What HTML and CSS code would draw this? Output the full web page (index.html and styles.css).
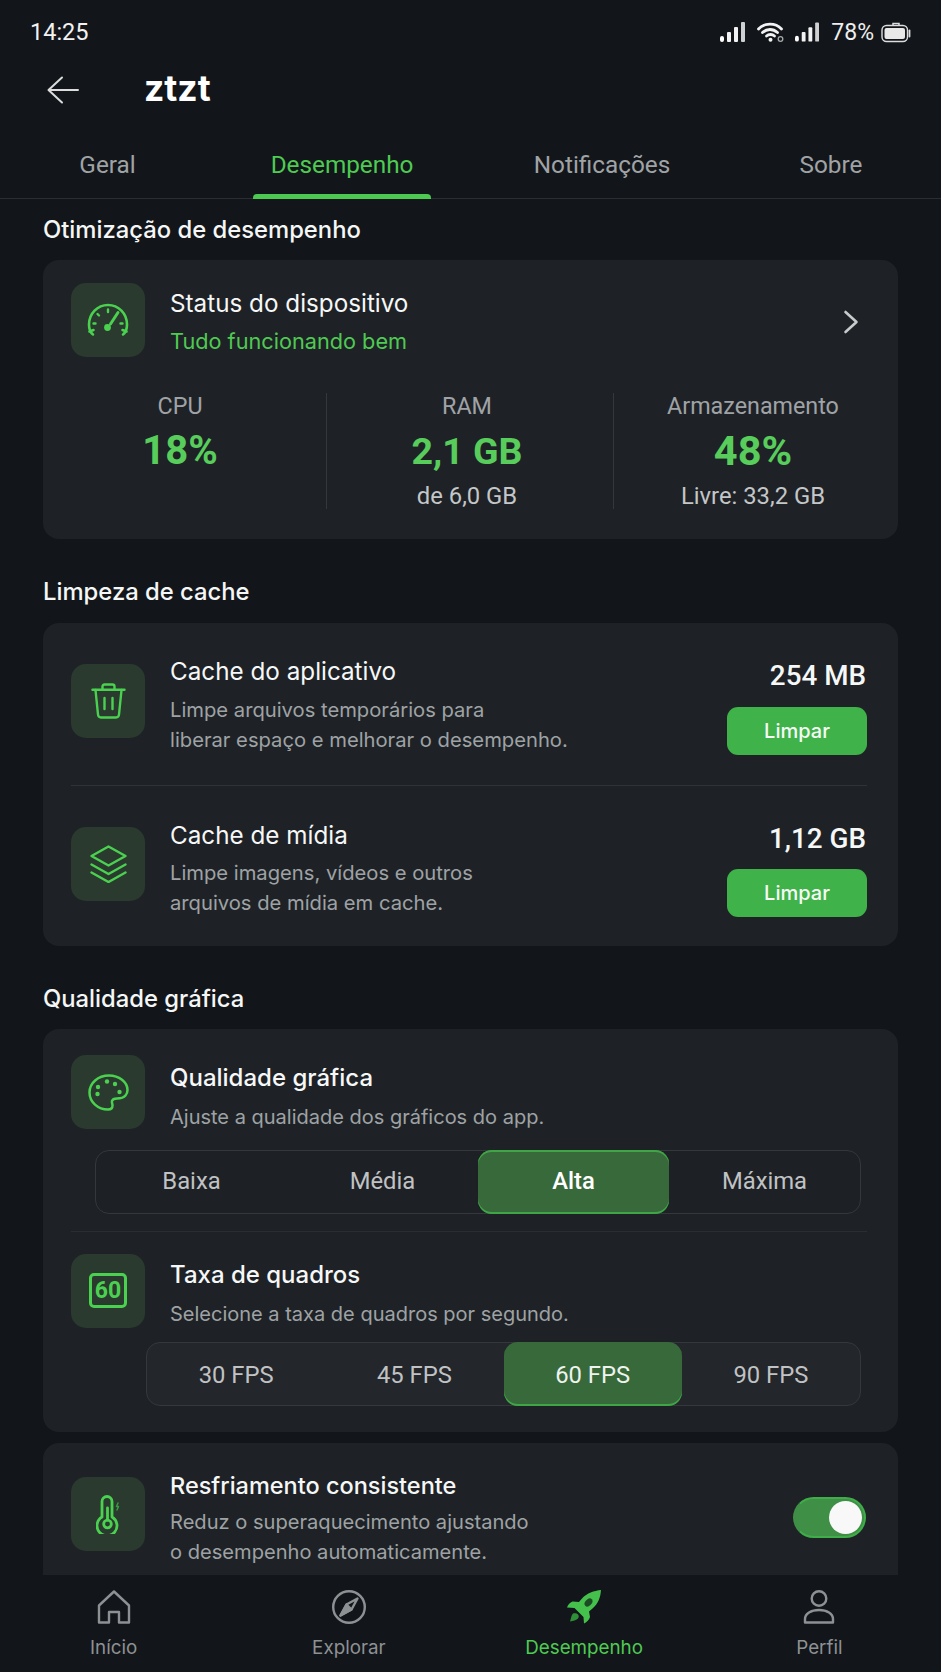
FILE: index.html
```html
<!DOCTYPE html>
<html lang="pt">
<head>
<meta charset="utf-8">
<title>ztzt</title>
<link rel="stylesheet" href="styles.css">
</head>
<body>
<div class="app">
  <div class="statusbar">
    <span class="time">14:25</span>
    <div class="status-icons">
      <svg class="sig" viewBox="0 0 25 20"><rect x="0" y="14" width="4" height="6" rx="2" fill="#fff"/><rect x="7" y="10" width="4" height="10" rx="1" fill="#f2f2f2"/><rect x="14" y="5" width="4" height="15" rx="1" fill="#f2f2f2"/><rect x="21" y="0" width="4" height="20" rx="1" fill="#cfd0d1"/></svg>
      <svg class="wifi" viewBox="0 0 27 20" fill="none" stroke="#f2f2f2" stroke-width="2.800" stroke-linecap="round"><path d="M1.500 7C7.500 .6 18.500 .6 24.500 7"/><path d="M5.500 10.500c4.500-4 10.500-4 15 0"/><path d="M9.500 14c2.200-2 5.800-2 8 0"/><circle cx="13.500" cy="17.800" r="2" fill="#f2f2f2" stroke="none"/><circle cx="23.500" cy="17" r="2.300" stroke="#a8a8a8" stroke-width="1.300"/></svg>
      <svg class="sig sig2" viewBox="0 0 25 20"><rect x="0" y="14" width="4" height="6" rx="2" fill="#fff"/><rect x="7" y="10" width="4" height="10" rx="1" fill="#f2f2f2"/><rect x="14" y="5" width="4" height="15" rx="1" fill="#f2f2f2"/><rect x="21" y="0" width="4" height="20" rx="1" fill="#cfd0d1"/></svg>
      <span class="pct">78%</span>
      <svg class="batt" viewBox="0 0 30 21" fill="none"><path d="M12 3V1.500h6V3" stroke="#ddd" stroke-width="1.500"/><rect x="1" y="3.500" width="25.500" height="16" rx="4.500" stroke="#ddd" stroke-width="1.400"/><rect x="3.500" y="6" width="20.500" height="11" rx="2" fill="#e8e8e8"/><path d="M28.500 8.500v6" stroke="#ddd" stroke-width="1.800" stroke-linecap="round"/></svg>
    </div>
  </div>

  <header class="appbar">
    <svg class="back" viewBox="0 0 32 28" fill="none" stroke="#dcdcdc" stroke-width="2" stroke-linecap="round" stroke-linejoin="round"><path d="M15 1.500 1.500 14 15 26.500M2 14h29"/></svg>
    <h1 class="title">ztzt</h1>
  </header>

  <nav class="tabs">
    <span class="tab tab-a">Geral</span>
    <span class="tab tab-b tab-active">Desempenho</span>
    <span class="tab tab-c">Notificações</span>
    <span class="tab tab-d">Sobre</span>
  </nav>

  <main class="content">
    <h2 class="section first">Otimização de desempenho</h2>
    <section class="card card-status">
      <div class="status-row">
        <div class="tile">
          <svg class="ico-gauge" viewBox="0 0 42 34" fill="none" stroke="#4bd150" stroke-width="2.600" stroke-linecap="round" stroke-linejoin="round"><path d="M6 31.500C3.300 29.500 2 25.500 2 21.500 2 10.500 10.500 2 21 2s19 8.500 19 19.500c0 4-1.300 8-4 10"/><path d="M2.500 28.500 6.500 27M39.500 28.500 35.500 27"/><path d="M21 6.500v2.500M10.500 11l1.500 1.500M6.500 20.500h2M33.500 20.500h2" stroke-width="2.400"/><path d="M31 9.500 23.500 21" stroke-width="3"/><circle cx="20.500" cy="24.500" r="3.400" fill="#4bd150" stroke="none"/></svg>
        </div>
        <div class="status-text">
          <div class="row-title">Status do dispositivo</div>
          <div class="status-ok">Tudo funcionando bem</div>
        </div>
        <svg class="chev" viewBox="0 0 16 24" fill="none" stroke="#c8cacc" stroke-width="2.600" stroke-linecap="round" stroke-linejoin="round"><path d="M2.500 2 13.500 12 2.500 22"/></svg>
      </div>
      <div class="stats">
        <div class="stat stat-a">
          <div class="stat-label">CPU</div>
          <div class="stat-value">18%</div>
        </div>
        <div class="stat stat-b">
          <div class="stat-label">RAM</div>
          <div class="stat-value">2,1 GB</div>
          <div class="stat-sub">de 6,0 GB</div>
        </div>
        <div class="stat stat-c">
          <div class="stat-label">Armazenamento</div>
          <div class="stat-value">48%</div>
          <div class="stat-sub">Livre: 33,2 GB</div>
        </div>
      </div>
    </section>

    <h2 class="section">Limpeza de cache</h2>
    <section class="card card-cache">
      <div class="cache-row cache-first">
        <div class="tile">
          <svg class="ico-trash" viewBox="0 0 35 36" fill="none" stroke="#4bd150" stroke-width="2.400" stroke-linecap="round" stroke-linejoin="round"><path d="M1.500 6.800h32"/><path d="M11.500 6.500V3.500c0-1.200.8-2 2-2h8c1.200 0 2 .8 2 2v3"/><path d="M4.500 7 7 31.500c.2 2 1.300 3 3 3h15c1.700 0 2.800-1 3-3L30.500 7"/><path d="M13.500 15v11M21.500 15v11"/></svg>
        </div>
        <div class="cache-text">
          <div class="row-title">Cache do aplicativo</div>
          <p class="desc">Limpe arquivos temporários para<br>liberar espaço e melhorar o desempenho.</p>
        </div>
        <div class="cache-side">
          <div class="size">254 MB</div>
          <button class="btn">Limpar</button>
        </div>
      </div>
      <div class="cache-row cache-second">
        <div class="tile">
          <svg class="ico-layers" viewBox="0 0 37 38" fill="none" stroke="#4bd150" stroke-width="2.400" stroke-linecap="round" stroke-linejoin="round"><path d="M18.500 1.500 35.500 11 18.500 20.500 1.500 11Z"/><path d="M1.500 19.500 18.500 29 35.500 19.500"/><path d="M1.500 27.500 18.500 37 35.500 27.500"/></svg>
        </div>
        <div class="cache-text">
          <div class="row-title">Cache de mídia</div>
          <p class="desc">Limpe imagens, vídeos e outros<br>arquivos de mídia em cache.</p>
        </div>
        <div class="cache-side">
          <div class="size">1,12 GB</div>
          <button class="btn">Limpar</button>
        </div>
      </div>
    </section>

    <h2 class="section section-q">Qualidade gráfica</h2>
    <section class="card card-quality">
      <div class="option-head">
        <div class="tile">
          <svg class="ico-palette" viewBox="0 0 41 37" fill="none" stroke="#4bd150" stroke-width="2.500" stroke-linecap="round" stroke-linejoin="round"><path d="M21 1.500C10 1.500 1.500 9 1.500 18.500 1.500 28 10 35.500 20 35.500c3 0 4.500-1.500 4.500-4 0-2-1-3-.5-4.500.6-2 2.500-2.500 5-2.500 3.500 0 6.500-.5 8.500-3 1.500-1.800 2-3.500 2-5.500C39.500 8 31 1.500 21 1.500Z"/><g fill="#4bd150" stroke="none"><circle cx="9.500" cy="20" r="2.200"/><circle cx="10" cy="13" r="2.200"/><circle cx="19" cy="7.500" r="2.200"/><circle cx="27" cy="10" r="2.200"/><circle cx="31.500" cy="18" r="2.200"/></g></svg>
        </div>
        <div class="option-text">
          <div class="row-title row-medium">Qualidade gráfica</div>
          <p class="desc desc-option">Ajuste a qualidade dos gráficos do app.</p>
        </div>
      </div>
      <div class="seg seg-quality">
        <span class="seg-item">Baixa</span>
        <span class="seg-item">Média</span>
        <span class="seg-item seg-on seg-strong">Alta</span>
        <span class="seg-item">Máxima</span>
      </div>
      <div class="rule"></div>
      <div class="option-head option-fps">
        <div class="tile">
          <div class="ico-60">60</div>
        </div>
        <div class="option-text">
          <div class="row-title row-medium">Taxa de quadros</div>
          <p class="desc desc-option">Selecione a taxa de quadros por segundo.</p>
        </div>
      </div>
      <div class="seg seg-fps">
        <span class="seg-item">30 FPS</span>
        <span class="seg-item">45 FPS</span>
        <span class="seg-item seg-on">60 FPS</span>
        <span class="seg-item">90 FPS</span>
      </div>
    </section>

    <section class="card card-cool">
      <div class="tile">
        <svg class="ico-thermo" viewBox="0 0 25 39" fill="none" stroke="#4bd150" stroke-width="2.800" stroke-linecap="round" stroke-linejoin="round"><path d="M6.500 22V6.500a5 5 0 0 1 10 0V22a10 10 0 1 1-10 0Z" transform="translate(-.5 0)"/><circle cx="11.500" cy="29" r="3.800"/><path d="M11.500 25V13"/><path d="M22 8l-1.500 3.500h2L21 15" stroke="#3a9a40" stroke-width="1.500"/></svg>
      </div>
      <div class="cool-text">
        <div class="row-title row-cool">Resfriamento consistente</div>
        <p class="desc">Reduz o superaquecimento ajustando<br>o desempenho automaticamente.</p>
      </div>
      <div class="toggle"><span class="knob"></span></div>
    </section>
  </main>

  <nav class="bottom">
    <div class="bn">
      <svg class="bn-ico" viewBox="0 0 33 34" fill="none" stroke="#8e9194" stroke-width="2.400" stroke-linejoin="round" stroke-linecap="round"><path d="M1.500 15.500 16.500 1.500 31.500 15.500V32.500H21.500V22H11.500V32.500H1.500Z"/></svg>
      <span>Início</span>
    </div>
    <div class="bn">
      <svg class="bn-ico" viewBox="0 0 34 34" fill="none" stroke="#8e9194" stroke-width="2.400" stroke-linejoin="round"><circle cx="17" cy="17" r="15.800"/><path d="M25.500 8.500 14.500 14.500 8.500 25.500 19.500 19.500Z"/><path d="M14.500 14.500 19.500 19.500 8.500 25.500Z" fill="#8e9194"/></svg>
      <span>Explorar</span>
    </div>
    <div class="bn bn-on">
      <svg class="bn-ico" viewBox="0 0 34 34"><path fill="#45c04c" d="M34 0c-7 .8-14 3-19 8.500l-3 3.500-6.500-.5C3 12.500 1 14.500 0 17.500l7.500.5 9 9 .5 6.500c2.500-1 5-3.500 6-6.500l-1-5.500 3.500-3C31.500 13.500 33.500 7 34 0Z"/><ellipse cx="21.500" cy="12.500" rx="4.600" ry="3.100" transform="rotate(-45 21.500 12.500)" fill="#1b4a24"/><path fill="#2f8f38" d="M6 23.500c2-.8 4-.2 5 1s1.200 3-.5 4.500c-1.500 1.300-4 1.800-7.500 2.500 1-3 1.300-6.500 3-8Z"/></svg>
      <span>Desempenho</span>
    </div>
    <div class="bn">
      <svg class="bn-ico" viewBox="0 0 31 34" fill="none" stroke="#8e9194" stroke-width="2.400" stroke-linejoin="round"><circle cx="15.500" cy="8.500" r="7.300"/><path d="M1.500 32.500V29c0-5.500 6-9 14-9s14 3.500 14 9v3.500Z"/></svg>
      <span>Perfil</span>
    </div>
  </nav>
</div>
</body>
</html>
```

FILE: styles.css
```css
* { box-sizing: border-box; }
html, body { margin: 0; padding: 0; background: #12161a; }
body { font-family: "Inter", "Roboto", "Liberation Sans", sans-serif; color: #f4f5f5; }

.app { width: 941px; height: 1672px; display: flex; flex-direction: column; overflow: hidden; background: #12161a; }

/* status bar */
.statusbar { height: 60px; flex: none; display: flex; align-items: center; justify-content: space-between; padding: 4px 30px 0 30px; font-family: "Roboto", sans-serif; }
.time { font-size: 23.500px; color: #f2f2f2; }
.status-icons { display: flex; align-items: center; }
.sig { width: 25px; height: 20px; }
.wifi { width: 27px; height: 20px; margin-left: 12px; }
.sig2 { margin-left: 11px; width: 24px; }
.pct { font-size: 23px; margin-left: 12px; color: #eee; }
.batt { width: 30px; height: 21px; margin-left: 7px; }

/* app bar */
.appbar { height: 62px; flex: none; display: flex; align-items: center; padding-left: 47px; }
.back { width: 32px; height: 28px; margin-top: -2px; }
.title { margin: -4px 0 0 65px; font: 700 35.500px/1 "Inter", sans-serif; color: #fff; }

/* tabs */
.tabs { height: 77px; flex: none; display: flex; position: relative; border-bottom: 1px solid #2a2e32; font: 400 24.300px/1 "Roboto", sans-serif; color: #a0a3a6; }
.tab { display: flex; justify-content: center; padding-top: 31px; height: 77px; }
.tab-a { width: 215px; }
.tab-b { width: 254px; }
.tab-c { width: 266px; }
.tab-d { width: 192px; }
.tab-active { color: #4fca52; position: relative; }
.tab-active::after { content: ""; position: absolute; left: 38px; right: 38px; bottom: 0; height: 5px; background: #4bc950; border-radius: 4px 4px 0 0; }

/* content */
.content { flex: 1; min-height: 0; overflow: hidden; padding: 0 43px 0 43px; }
.section { margin: 36px 0 14px; height: 34px; font: 500 23.800px/34px "Inter", sans-serif; color: #f5f6f6; }
.section.first { margin-top: 14px; margin-bottom: 13px; }
.section.section-q { margin-top: 36px; margin-bottom: 13px; }

.card { background: #1e2226; border-radius: 16px; padding-left: 28px; padding-right: 31px; }
.tile { width: 74px; height: 74px; flex: none; border-radius: 15px; background: #2a3a2e; display: flex; align-items: center; justify-content: center; }
.row-title { font: 400 24.250px/32px "Inter", sans-serif; color: #f6f7f7; }
.row-medium { font-weight: 500; font-size: 24px; }
.row-cool { font-weight: 500; font-size: 23.500px; }
.desc { margin: 0; font: 400 20.200px/29.500px "Inter", sans-serif; color: #9fa2a5; }
.desc-option { font-size: 20px; }

/* status card */
.card-status { height: 279px; padding: 23px 0 0 0; }
.status-row { display: flex; align-items: center; padding: 0 39px 0 28px; }
.status-text { flex: 1; margin: 5px 0 0 25px; }
.status-ok { font: 400 21.700px/32px "Inter", sans-serif; color: #4fca52; margin-top: 5px; }
.chev { width: 16px; height: 24px; margin-top: 3px; }
.ico-gauge { width: 42px; height: 34px; }
.stats { display: flex; margin-top: 36px; }
.stat { height: 116px; padding-right: 9px; border-right: 1px solid #34383c; text-align: center; }
.stat-a { width: 284px; }
.stat-b { width: 287px; padding-right: 6px; }
.stat-c { flex: 1; border-right: 0; padding-right: 6px; }
.stat-label { font: 400 23.300px/28px "Roboto", sans-serif; color: #a0a3a6; margin-top: -1px; }
.stat-value { font: 700 40px/44px "Roboto", sans-serif; color: #58cd5b; margin-top: 9px; }
.stat-b .stat-value { font-size: 37.500px; }
.stat-c .stat-value { font-size: 41.500px; }
.stat-sub { font: 400 23.800px/28px "Roboto", sans-serif; color: #c4c6c8; margin-top: 9px; }

/* cache card */
.card-cache { height: 323px; }
.cache-row { display: flex; align-items: flex-start; padding-top: 34px; height: 160px; }
.cache-first { padding-top: 33px; height: 163px; border-bottom: 1px solid #2f3337; }
.cache-row .tile { margin-top: 8px; }
.cache-second .tile { margin-top: 7px; }
.cache-text { flex: 1; margin-left: 25px; }
.cache-text .desc { margin-top: 7px; }
.cache-second .cache-text .desc { margin-top: 6px; }
.cache-side { display: flex; flex-direction: column; align-items: flex-end; margin-top: 4px; }
.cache-second .cache-side { margin-top: 3px; }
.size { font: 500 27.800px/32px "Roboto", sans-serif; color: #f6f7f7; margin-right: 1px; }
.btn { width: 140px; height: 48px; margin-top: 15px; border: 0; border-radius: 11px; background: #3fb24a; color: #f6fbf6; font: 500 20px/1 "Inter", sans-serif; padding: 0; }
.cache-second .btn { margin-top: 14px; }
.ico-trash { width: 35px; height: 36px; }
.ico-layers { width: 37px; height: 38px; }

/* quality card */
.card-quality { height: 403px; padding-top: 26px; }
.option-head { display: flex; align-items: flex-start; }
.option-text { margin-left: 25px; margin-top: 7px; }
.option-text .desc { margin-top: 9px; }
.ico-palette { width: 41px; height: 37px; }
.seg { display: grid; grid-template-columns: repeat(4, 1fr); height: 64px; border: 1px solid #34383c; border-radius: 14px; background: #1d2024; font: 400 23.800px/1 "Roboto", sans-serif; color: #c0c2c4; }
.seg-quality { margin: 17px 6px 0 24px; }
.seg-fps { margin: 13px 6px 0 75px; background: #23262b; }
.seg-item { display: flex; align-items: center; justify-content: center; margin: -1px 0; padding-top: 1px; }
.seg-fps .seg-item { padding-top: 3px; }
.seg-on { background: #38693b; border-radius: 14px; box-shadow: inset 0 -2px 0 #3fa646; color: #eef3ee; }
.seg-quality .seg-on { box-shadow: inset 0 -2px 0 #3fa646, inset 0 2px 0 #3fa646; }
.seg-strong { font-weight: 500; color: #fff; }
.rule { height: 1px; background: #2a2e32; margin-top: 17px; }
.option-fps { margin-top: 22px; }
.option-fps .option-text { margin-top: 5px; }
.ico-60 { width: 38px; height: 35px; border: 3px solid #4bd150; border-radius: 5px; display: flex; align-items: center; justify-content: center; font: 700 23px/1 "Roboto", sans-serif; color: #4bd150; }

/* cool card */
.card-cool { margin-top: 11px; height: 180px; display: flex; align-items: flex-start; padding-top: 34px; padding-right: 32px; }
.cool-text { flex: 1; margin-left: 25px; margin-top: -7px; }
.cool-text .desc { margin-top: 6px; font-size: 20.100px; }
.ico-thermo { width: 25px; height: 39px; }
.toggle { width: 73px; height: 41px; margin-top: 20px; border-radius: 21px; background: #3f8f46; border: 2px solid #3fae48; border-left-color: #3f8f46; display: flex; align-items: center; justify-content: flex-end; padding-right: 2px; }
.knob { width: 33px; height: 33px; border-radius: 50%; background: #f7f8f7; }

/* bottom nav */
.bottom { height: 97px; width: 941px; flex: none; margin-left: -4px; display: grid; grid-template-columns: repeat(4, 1fr); padding-top: 15px; }
.bn { display: flex; flex-direction: column; align-items: center; font: 400 18.800px/24px "Inter", sans-serif; color: #8e9194; }
.bn-ico { height: 34px; width: 34px; margin-bottom: 12px; }
.bn-on { color: #4fca52; }
```
